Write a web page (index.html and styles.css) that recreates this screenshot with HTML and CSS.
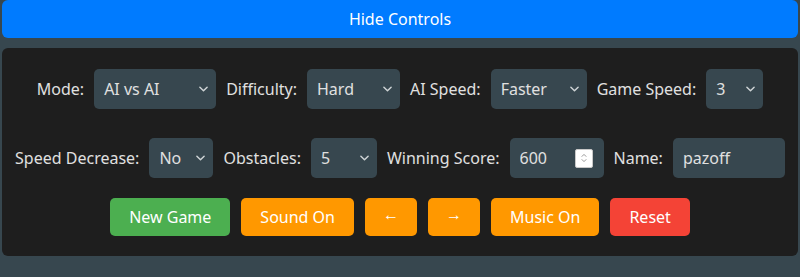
FILE: index.html
```html
<!DOCTYPE html>
<html lang="en">
<head>
<meta charset="utf-8">
<title>Controls</title>
<link rel="stylesheet" href="styles.css">
</head>
<body>
<div class="app">
  <button class="toggle">Hide Controls</button>
  <div class="panel">
    <div class="row row-1">
      <label class="lbl">Mode:</label>
      <div class="sel w-mode">
        <select><option>AI vs AI</option></select>
        <svg class="chev" viewBox="0 0 10 6" width="9" height="6"><path d="M1 1l4 4 4-4" fill="none" stroke="#cfd4d6" stroke-width="1.6" stroke-linecap="round" stroke-linejoin="round"/></svg>
      </div>
      <label class="lbl">Difficulty:</label>
      <div class="sel w-diff">
        <select><option>Hard</option></select>
        <svg class="chev" viewBox="0 0 10 6" width="9" height="6"><path d="M1 1l4 4 4-4" fill="none" stroke="#cfd4d6" stroke-width="1.6" stroke-linecap="round" stroke-linejoin="round"/></svg>
      </div>
      <label class="lbl">AI Speed:</label>
      <div class="sel w-aispeed">
        <select><option>Faster</option></select>
        <svg class="chev" viewBox="0 0 10 6" width="9" height="6"><path d="M1 1l4 4 4-4" fill="none" stroke="#cfd4d6" stroke-width="1.6" stroke-linecap="round" stroke-linejoin="round"/></svg>
      </div>
      <label class="lbl">Game Speed:</label>
      <div class="sel w-gspeed">
        <select><option>3</option></select>
        <svg class="chev" viewBox="0 0 10 6" width="9" height="6"><path d="M1 1l4 4 4-4" fill="none" stroke="#cfd4d6" stroke-width="1.6" stroke-linecap="round" stroke-linejoin="round"/></svg>
      </div>
    </div>
    <div class="row row-2">
      <label class="lbl">Speed Decrease:</label>
      <div class="sel w-dec">
        <select><option>No</option></select>
        <svg class="chev" viewBox="0 0 10 6" width="9" height="6"><path d="M1 1l4 4 4-4" fill="none" stroke="#cfd4d6" stroke-width="1.6" stroke-linecap="round" stroke-linejoin="round"/></svg>
      </div>
      <label class="lbl">Obstacles:</label>
      <div class="sel w-obs">
        <select><option>5</option></select>
        <svg class="chev" viewBox="0 0 10 6" width="9" height="6"><path d="M1 1l4 4 4-4" fill="none" stroke="#cfd4d6" stroke-width="1.6" stroke-linecap="round" stroke-linejoin="round"/></svg>
      </div>
      <label class="lbl">Winning Score:</label>
      <div class="field w-score">
        <input type="text" value="600">
        <span class="spin">
          <svg viewBox="0 0 10 14" width="8" height="12"><path d="M2.5 5l2.5-2.5 2.5 2.5M2.5 9l2.5 2.5 2.5-2.5" fill="none" stroke="#8a8a8a" stroke-width="1.1" stroke-linecap="round" stroke-linejoin="round"/></svg>
        </span>
      </div>
      <label class="lbl">Name:</label>
      <div class="field w-name">
        <input type="text" value="pazoff">
      </div>
    </div>
    <div class="row row-3">
      <button class="btn green">New Game</button>
      <button class="btn orange">Sound On</button>
      <button class="btn orange arrow">←</button>
      <button class="btn orange arrow">→</button>
      <button class="btn orange">Music On</button>
      <button class="btn red">Reset</button>
    </div>
  </div>
</div>
</body>
</html>
```
FILE: styles.css
```css
* { box-sizing: border-box; }
html, body { margin: 0; padding: 0; }
body {
  background: #37474f;
  font-family: "Noto Sans", "Open Sans", sans-serif;
  font-size: 16px;
  color: #e0e0e0;
  height: 277px;
  overflow: hidden;
}
.app { padding: 0 2px; }
.toggle {
  display: block;
  width: 100%;
  height: 38px;
  border: 0;
  border-radius: 6px;
  background: #007bff;
  color: #fff;
  font: inherit;
  font-size: 16px;
  padding: 0;
}
.panel {
  margin-top: 10px;
  background: #1e1e1e;
  border-radius: 6px;
  padding: 21px 0 20px;
}
.row {
  display: flex;
  justify-content: center;
  align-items: center;
  gap: 10px;
}
.row-1 { height: 40px; margin-bottom: 29px; }
.row-2 { height: 40px; margin-bottom: 20px; }
.row-3 { height: 38px; gap: 11px; }
.lbl { color: #e0e0e0; white-space: nowrap; }
.sel { position: relative; height: 40px; }
.sel select {
  appearance: none;
  -webkit-appearance: none;
  width: 100%;
  height: 40px;
  border: 0;
  border-radius: 5px;
  background: #37474f;
  color: #e0e0e0;
  font: inherit;
  padding: 0 10px;
  outline: none;
}
.chev {
  position: absolute;
  right: 8px;
  top: 17px;
  pointer-events: none;
}
.w-mode { width: 122px; }
.w-diff { width: 93px; }
.w-aispeed { width: 96px; }
.w-gspeed { width: 57px; }
.w-dec { width: 64px; }
.w-obs { width: 66px; }
.field {
  display: flex;
  align-items: center;
  height: 40px;
  border-radius: 5px;
  background: #37474f;
  padding: 0 11px 0 10px;
}
.field input {
  flex: 1;
  min-width: 0;
  border: 0;
  background: transparent;
  color: #e0e0e0;
  font: inherit;
  padding: 0;
  outline: none;
}
.w-score { width: 94px; }
.w-name { width: 112px; }
.spin {
  flex: none;
  width: 18px;
  height: 19px;
  background: #fff;
  border: 1px solid #c8c8c8;
  border-radius: 2px;
  display: flex;
  align-items: center;
  justify-content: center;
}
.btn {
  height: 38px;
  border: 0;
  border-radius: 5px;
  color: #fff;
  font: inherit;
  font-size: 16px;
  padding: 0 19px;
}
.arrow { width: 52px; padding: 0 0 6px; line-height: 1; }
.green { background: #4caf50; }
.orange { background: #ff9800; }
.red { background: #f44336; }
```
